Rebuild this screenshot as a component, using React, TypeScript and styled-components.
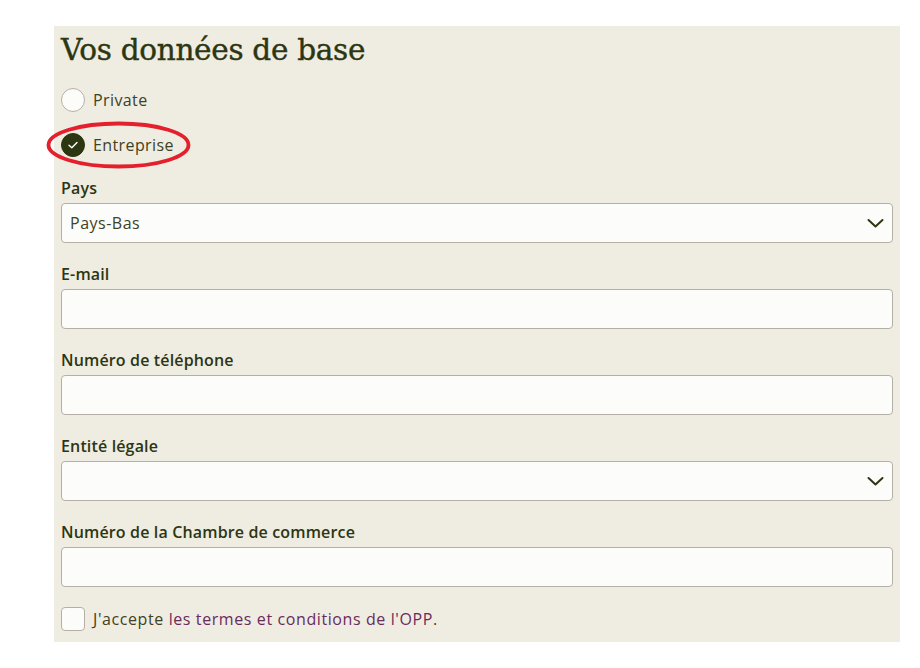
import styled, { createGlobalStyle } from "styled-components";

const GlobalStyle = createGlobalStyle`
    html, body {
        margin: 0;
        padding: 0;
        background: #ffffff;
    }
    body {
        font-family: "Open Sans", "Liberation Sans", sans-serif;
        color: #2c3611;
    }
`;

const Page = styled.div`
    padding: 26px 20px 0 54px;
`;

const Panel = styled.div`
    background-color: #efece2;
    padding: 4px 7px 11px 7px;
    display: flex;
    flex-direction: column;
`;

const Title = styled.h1`
    margin: 0 0 18px 0;
    font-family: "DejaVu Serif", "Liberation Serif", serif;
    font-weight: 400;
    font-size: 29.5px;
    line-height: 40px;
    letter-spacing: -0.3px;
    color: #2c3611;
    -webkit-text-stroke: 0.4px #2c3611;
`;

const RadioList = styled.div`
    display: flex;
    flex-direction: column;
    gap: 21px;
    margin-bottom: 20px;
`;

const RadioRow = styled.label`
    position: relative;
    display: flex;
    align-items: center;
    gap: 8px;
    height: 24px;
    font-size: 16px;
    letter-spacing: 0.4px;
    color: #3f4224;
`;

interface ICircle {
    checked?: boolean;
}
const Circle = styled.span<ICircle>`
    box-sizing: border-box;
    width: 24px;
    height: 24px;
    border-radius: 50%;
    border: 1px solid ${props => props.checked ? "#2c3611" : "#b5b0a5"};
    background-color: ${props => props.checked ? "#2c3611" : "#fcfcfa"};
    display: flex;
    align-items: center;
    justify-content: center;
`;

const Highlight = styled.svg`
    position: absolute;
    left: -14px;
    top: -11px;
    width: 143px;
    height: 46px;
    pointer-events: none;
    overflow: visible;
`;

const Field = styled.div`
    display: flex;
    flex-direction: column;
    gap: 4px;
    margin-bottom: 20px;
`;

const Label = styled.div`
    font-size: 16px;
    font-weight: 600;
    letter-spacing: 0.15px;
    line-height: 22px;
    color: #2c3611;
`;

const InputBox = styled.div`
    position: relative;
    box-sizing: border-box;
    height: 40px;
    border: 1px solid #b5b0a5;
    border-radius: 4px;
    background-color: #fcfcfa;
    display: flex;
    align-items: center;
    padding: 0 8px;
    font-size: 16px;
    letter-spacing: 0.5px;
    color: #3f4224;
`;

const Chevron = styled.svg`
    position: absolute;
    right: 8px;
    top: 50%;
    margin-top: -8px;
    width: 17px;
    height: 16px;
`;

const CheckRow = styled.div`
    display: flex;
    align-items: center;
    gap: 8px;
    height: 24px;
    font-size: 16px;
    letter-spacing: 0.6px;
    color: #3f4224;
`;

const Box = styled.span`
    box-sizing: border-box;
    width: 24px;
    height: 24px;
    border: 1px solid #b5b0a5;
    border-radius: 4px;
    background-color: #fcfcfa;
`;

const Link = styled.span`
    color: #6a2a5c;
`;

function ChevronDown() {
    return (
        <Chevron viewBox="0 0 17 16" fill="none">
            <path d="M1.5 5 L8.5 11.5 L15.5 5" stroke="#2c3611" strokeWidth="2" strokeLinecap="round" strokeLinejoin="round" />
        </Chevron>
    );
}

interface IFieldProps {
    label: string;
    value?: string;
    select?: boolean;
}
function FormField({ label, value, select }: IFieldProps) {
    return (
        <Field>
            <Label>{label}</Label>
            <InputBox>
                {value}
                {select && <ChevronDown />}
            </InputBox>
        </Field>
    );
}

function App() {
    return (
        <>
            <GlobalStyle />
            <Page>
                <Panel>
                    <Title>Vos données de base</Title>
                    <RadioList>
                        <RadioRow>
                            <Circle />
                            Private
                        </RadioRow>
                        <RadioRow>
                            <Circle checked>
                                <svg width="14" height="14" viewBox="0 0 14 14" fill="none">
                                    <path d="M3 7.3 L5.8 9.8 L11 4.4" stroke="#ffffff" strokeWidth="1.4" strokeLinecap="round" strokeLinejoin="round" />
                                </svg>
                            </Circle>
                            Entreprise
                            <Highlight viewBox="0 0 143 46">
                                <ellipse cx="71.5" cy="23" rx="70" ry="21.5" fill="none" stroke="#e3202b" strokeWidth="3.8" />
                            </Highlight>
                        </RadioRow>
                    </RadioList>
                    <FormField label="Pays" value="Pays-Bas" select />
                    <FormField label="E-mail" />
                    <FormField label="Numéro de téléphone" />
                    <FormField label="Entité légale" select />
                    <FormField label="Numéro de la Chambre de commerce" />
                    <CheckRow>
                        <Box />
                        <span>
                            J'accepte <Link>les termes et conditions de l'OPP</Link>.
                        </span>
                    </CheckRow>
                </Panel>
            </Page>
        </>
    );
}

export default App;
